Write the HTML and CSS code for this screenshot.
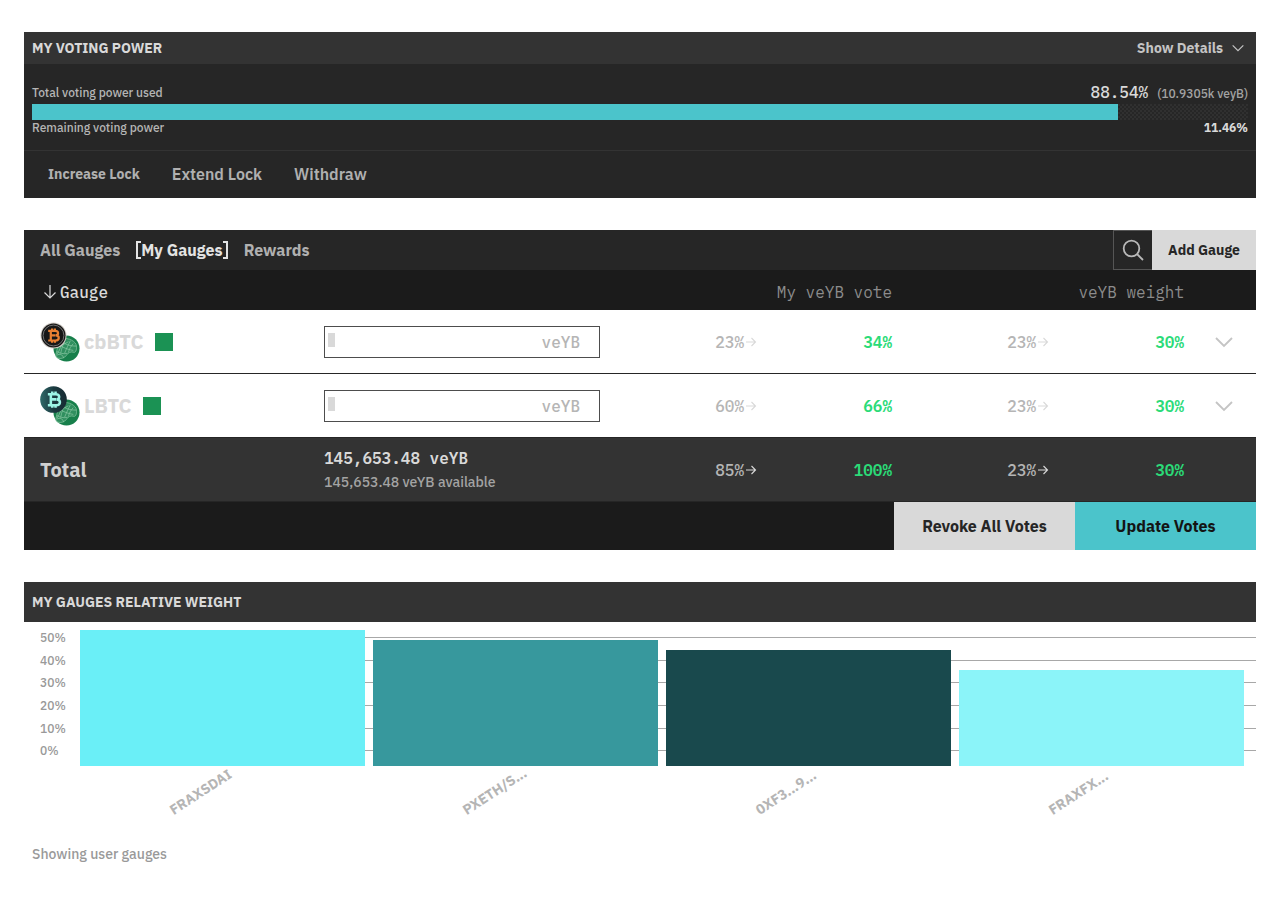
FILE: index.html
```html
<!DOCTYPE html>
<html lang="en">
<head>
  <meta charset="UTF-8">
  <meta name="viewport" content="width=device-width, initial-scale=1.0">
  <title>My Gauges</title>
  <link rel="stylesheet" href="styles.css">
</head>
<body>
  <svg class="defs" aria-hidden="true">
    <defs>
      <symbol id="chevron" viewBox="0 0 20 12">
        <path d="M2 2l8 8 8-8" fill="none" stroke="currentColor" stroke-width="1.8"/>
      </symbol>
      <symbol id="arrow" viewBox="0 0 12 12">
        <path d="M1 6h9.5M6.5 2l4 4-4 4" fill="none" stroke="currentColor" stroke-width="1.1"/>
      </symbol>
      <symbol id="bitcoin" viewBox="0 0 14 16">
        <path d="M1 3.2h7.2c4 0 3.8 4.4.9 4.7 4 .4 3.8 5.3-.6 5.3H1M3.7 3.2v10M3.7 7.9h5M5 .8v2.4M8 .8v2.4M5 13.2v2.2M8 13.2v2.2" fill="none" stroke="currentColor" stroke-width="2.3"/>
      </symbol>
      <symbol id="chain" viewBox="0 0 28 28">
        <circle cx="14" cy="14" r="13.5" fill="#177f4b"/>
        <g fill="none" stroke="#8cc9a6" stroke-width=".7">
          <path d="M9 4.500C13 2 22 5 24 10c1 4 0 8-2 8-4-1-6 0-8 3-2 3-6 4-9 3-3-1-2-4-1-8 1-5 2-9 5-11.500z" fill="#4aa073" fill-opacity=".5"/>
          <path d="M9 4.500c1 5 8 7 15 7M6 10c4 3 9 5 15 6M4 17c3 2 7 3 11 2M4 21c3-2 6-1 7 3M13 4c-2 5-4 9-5 15M18 6c-2 4-4 8-6 13M21 9c-2 2-4 5-5 9M9 5c0 6-2 11-5 15M5 13l11-6"/>
        </g>
      </symbol>
    </defs>
  </svg>

  <main class="page">
    <section class="panel">
      <header class="panel-header">
        <h2>My Voting Power</h2>
        <button class="details-button" type="button">Show Details
          <svg class="chevron-small"><use href="#chevron"/></svg>
        </button>
      </header>
      <div class="power">
        <div class="power-row power-used">
          <span>Total voting power used</span>
          <span><strong class="power-value">88.54%</strong><span class="power-amount">(10.9305k veyB)</span></span>
        </div>
        <div class="bar"><div class="bar-fill" style="width: 89.3%"></div></div>
        <div class="power-row">
          <span>Remaining voting power</span>
          <strong class="power-left">11.46%</strong>
        </div>
      </div>
      <div class="actions">
        <button class="action action-small" type="button">Increase Lock</button>
        <button class="action" type="button">Extend Lock</button>
        <button class="action" type="button">Withdraw</button>
      </div>
    </section>

    <section class="gauges">
      <div class="toolbar">
        <nav class="tabs">
          <a href="#all">All Gauges</a>
          <a href="#my" class="active">My Gauges</a>
          <a href="#rewards">Rewards</a>
        </nav>
        <button class="search-button" type="button" aria-label="Search">
          <svg viewBox="0 0 24 24"><circle cx="10.500" cy="10.500" r="7.800"/><path d="M16 16l6 6"/></svg>
        </button>
        <button class="add-button" type="button">Add Gauge</button>
      </div>

      <table class="gauge-table">
        <colgroup>
          <col><col><col><col><col class="col-toggle">
        </colgroup>
        <thead>
          <tr>
            <th class="col-name sorted"><svg viewBox="0 0 14 16"><path d="M7 1v13M1.500 8.500L7 14l5.500-5.500"/></svg>Gauge</th>
            <th></th>
            <th>My veYB vote</th>
            <th>veYB weight</th>
            <th></th>
          </tr>
        </thead>
        <tbody>
          <tr>
            <td class="col-name">
              <div class="gauge">
                <span class="coins">
                  <svg class="coin-back"><use href="#chain"/></svg>
                  <svg class="coin-front coin-cb" viewBox="0 0 28 28">
                    <circle cx="14" cy="14" r="13.500" fill="#d5d0ca"/>
                    <circle cx="14" cy="14" r="12.500" fill="#171717"/>
                    <circle cx="14" cy="14" r="10.800" fill="none" stroke="#8b8b8b" stroke-width=".8"/>
                    <use href="#bitcoin" x="7" y="6" width="15" height="16"/>
                  </svg>
                </span>
                <span class="gauge-name">cbBTC</span>
                <span class="marker"></span>
              </div>
            </td>
            <td>
              <div class="amount">
                <input type="text" id="vote-cbbtc" aria-label="cbBTC vote amount">
                <span class="caret"></span>
                <label for="vote-cbbtc">veYB</label>
              </div>
            </td>
            <td><div class="change"><span>23%<svg><use href="#arrow"/></svg></span><strong>34%</strong></div></td>
            <td><div class="change"><span>23%<svg><use href="#arrow"/></svg></span><strong>30%</strong></div></td>
            <td class="toggle-cell"><button class="toggle" type="button" aria-label="Expand cbBTC"><svg><use href="#chevron"/></svg></button></td>
          </tr>
          <tr>
            <td class="col-name">
              <div class="gauge">
                <span class="coins">
                  <svg class="coin-back"><use href="#chain"/></svg>
                  <svg class="coin-front coin-l" viewBox="0 0 28 28">
                    <defs>
                      <linearGradient id="lbtc"><stop offset="0" stop-color="#2f6a69"/><stop offset=".5" stop-color="#1b3a40"/><stop offset="1" stop-color="#172c33"/></linearGradient>
                    </defs>
                    <circle cx="14" cy="14" r="13.800" fill="url(#lbtc)"/>
                    <use href="#bitcoin" x="7" y="4" width="16" height="20"/>
                  </svg>
                </span>
                <span class="gauge-name">LBTC</span>
                <span class="marker"></span>
              </div>
            </td>
            <td>
              <div class="amount">
                <input type="text" id="vote-lbtc" aria-label="LBTC vote amount">
                <span class="caret"></span>
                <label for="vote-lbtc">veYB</label>
              </div>
            </td>
            <td><div class="change"><span>60%<svg><use href="#arrow"/></svg></span><strong>66%</strong></div></td>
            <td><div class="change"><span>23%<svg><use href="#arrow"/></svg></span><strong>30%</strong></div></td>
            <td class="toggle-cell"><button class="toggle" type="button" aria-label="Expand LBTC"><svg><use href="#chevron"/></svg></button></td>
          </tr>
        </tbody>
        <tfoot>
          <tr>
            <td class="col-name total-name">Total</td>
            <td>
              <div class="total-amount">145,653.48 veYB</div>
              <div class="total-available">145,653.48 veYB available</div>
            </td>
            <td><div class="change"><span>85%<svg><use href="#arrow"/></svg></span><strong>100%</strong></div></td>
            <td><div class="change"><span>23%<svg><use href="#arrow"/></svg></span><strong>30%</strong></div></td>
            <td></td>
          </tr>
        </tfoot>
      </table>

      <div class="vote-buttons">
        <button class="revoke" type="button">Revoke All Votes</button>
        <button class="update" type="button">Update Votes</button>
      </div>
    </section>

    <section class="weights">
      <header class="panel-header weights-header">
        <h2>My Gauges Relative Weight</h2>
      </header>
      <div class="chart">
        <ul class="scale">
          <li><span>50%</span></li>
          <li><span>40%</span></li>
          <li><span>30%</span></li>
          <li><span>20%</span></li>
          <li><span>10%</span></li>
          <li><span>0%</span></li>
        </ul>
        <div class="columns">
          <div class="column" style="height: 136px; background-color: #6aeff7"></div>
          <div class="column" style="height: 126px; background-color: #37989d"></div>
          <div class="column" style="height: 116px; background-color: #19494d"></div>
          <div class="column" style="height: 96px; background-color: #8bf4f9"></div>
        </div>
      </div>
      <div class="names">
        <div><span>FRAXSDAI</span></div>
        <div><span>PXETH/S...</span></div>
        <div><span>0XF3...9...</span></div>
        <div><span>FRAXFX...</span></div>
      </div>
      <p class="note">Showing user gauges</p>
    </section>
  </main>
</body>
</html>
```
FILE: styles.css
```css
* {
  box-sizing: border-box;
}
body {
  margin: 0;
  background-color: #ffffff;
  font-family: "IBM Plex Sans", Roboto, "Liberation Sans", sans-serif;
  font-size: 16px;
  font-weight: 500;
  color: #d9d9d9;
}
button {
  border: none;
  padding: 0;
  background: none;
  color: inherit;
  font-family: inherit;
  font-size: 16px;
  font-weight: 700;
  cursor: pointer;
}
.defs {
  position: absolute;
  width: 0;
  height: 0;
}
.page {
  display: flex;
  flex-direction: column;
  gap: 32px;
  padding: 32px 24px;
}

/* voting power */
.panel {
  background-color: #262626;
}
.panel-header {
  display: flex;
  justify-content: space-between;
  align-items: center;
  height: 32px;
  padding: 0 8px;
  background-color: #333333;
}
.panel-header h2 {
  margin: 0;
  font-size: 14px;
  font-weight: 700;
  text-transform: uppercase;
}
.details-button {
  display: flex;
  align-items: center;
  gap: 8px;
  padding-right: 3px;
  font-size: 14px;
  color: #c4c4c4;
}
.chevron-small {
  width: 14px;
  height: 8px;
}
.power {
  padding: 16px 8px;
}
.power-row {
  display: flex;
  justify-content: space-between;
  align-items: center;
  height: 14px;
  font-size: 12px;
  color: #b5b5b5;
}
.power-used {
  height: 24px;
}
.power-value {
  margin-right: 9px;
  font-family: "IBM Plex Mono", "Liberation Mono", monospace;
  font-size: 16px;
  font-weight: 500;
  color: #d9d9d9;
}
.power-amount {
  color: #a3a3a3;
}
.power-left {
  color: #d9d9d9;
}
.bar {
  height: 16px;
  background: conic-gradient(#303030 25%, #262626 0 50%, #303030 0 75%, #262626 0) 0 0 / 4px 4px;
}
.bar-fill {
  height: 100%;
  background-color: #4bc4cb;
}
.actions {
  display: flex;
  gap: 32px;
  height: 48px;
  padding: 0 24px 1px;
  border-top: 1px solid #333333;
}
.action {
  color: #b0b0b0;
  font-weight: 600;
}
.action-small {
  font-size: 14px;
  font-weight: 700;
}

/* gauge list */
.toolbar {
  display: flex;
  height: 40px;
  background-color: #262626;
}
.tabs {
  display: flex;
  flex: 1;
  align-items: center;
  gap: 16px;
  padding: 0 16px;
}
.tabs a {
  color: #b0b0b0;
  font-weight: 700;
  text-decoration: none;
}
.tabs .active {
  display: flex;
  align-items: center;
  color: #e3e3e3;
}
.active::before,
.active::after {
  content: "";
  box-sizing: border-box;
  width: 5px;
  height: 18px;
  border: 2px solid #e3e3e3;
}
.active::before {
  border-right: none;
}
.active::after {
  border-left: none;
}
.search-button {
  width: 39px;
  border: 1px solid #555555;
  border-right: none;
}
.search-button svg {
  display: block;
  width: 24px;
  height: 24px;
  margin: auto;
  fill: none;
  stroke: #b8b8b8;
  stroke-width: 1.8;
}
.add-button {
  width: 104px;
  background-color: #d9d9d9;
  color: #262626;
  font-size: 14px;
}
.gauge-table {
  width: 100%;
  table-layout: fixed;
  border-spacing: 0;
  font-family: "IBM Plex Mono", "Liberation Mono", monospace;
}
.col-toggle {
  width: 64px;
}
.gauge-table th,
.gauge-table td {
  padding: 0 8px;
}
.gauge-table .col-name {
  padding-left: 16px;
  text-align: left;
}
.gauge-table th {
  height: 40px;
  padding-top: 4px;
  background-color: #1b1b1b;
  color: #8c8c8c;
  font-weight: 400;
  text-align: right;
}
.gauge-table .sorted {
  color: #d9d9d9;
  font-weight: 500;
}
.sorted svg {
  width: 14px;
  height: 16px;
  margin: 0 3px;
  vertical-align: -2px;
  fill: none;
  stroke: currentColor;
  stroke-width: 1.2;
}
.gauge-table tr {
  height: 64px;
}
.gauge-table thead tr {
  height: 40px;
}
.gauge-table td {
  border-bottom: 1px solid #262626;
}
.gauge {
  display: flex;
  align-items: center;
}
.coins {
  position: relative;
  width: 40px;
  height: 40px;
  margin-right: 4px;
}
.coins svg {
  position: absolute;
  width: 27px;
  height: 27px;
}
.coin-back {
  right: 0;
  bottom: 0;
}
.coin-front {
  left: 0;
  top: 0;
}
.coin-cb {
  color: #e98032;
}
.coin-l {
  color: #9df5e6;
}
.gauge-name {
  font-family: "IBM Plex Sans", Roboto, "Liberation Sans", sans-serif;
  font-size: 20px;
  font-weight: 700;
}
.marker {
  width: 18px;
  height: 18px;
  margin-left: 11px;
  background-color: #1b9254;
}
.amount {
  position: relative;
  display: flex;
  align-items: center;
  height: 32px;
  padding-right: 19px;
  border: 1px solid #4d4d4d;
  color: #b5b5b5;
}
.amount input {
  flex: 1;
  min-width: 0;
  height: 100%;
  padding: 0 3px;
  border: none;
  outline: none;
  background: none;
  font: inherit;
}
.caret {
  position: absolute;
  left: 3px;
  top: 6px;
  width: 7px;
  height: 14px;
  background-color: #d9d9d9;
}
.change {
  display: flex;
  justify-content: flex-end;
  align-items: center;
  color: #b5b5b5;
}
.change span {
  display: flex;
  align-items: center;
}
.change svg {
  width: 12px;
  height: 12px;
  margin-left: 1px;
  color: #d9d9d9;
}
.change strong {
  width: 135px;
  color: #2bdb78;
  font-weight: 600;
  text-align: right;
}
.toggle-cell {
  text-align: center;
}
.toggle {
  color: #c4c4c4;
}
.toggle svg {
  display: block;
  width: 20px;
  height: 12px;
}
tfoot {
  background-color: #333333;
}
.total-name {
  font-family: "IBM Plex Sans", Roboto, "Liberation Sans", sans-serif;
  font-size: 20px;
  font-weight: 700;
  color: #d0d0d0;
}
.total-amount {
  line-height: 24px;
  font-weight: 600;
}
.total-available {
  font-family: "IBM Plex Sans", Roboto, "Liberation Sans", sans-serif;
  font-size: 14px;
  line-height: 24px;
  color: #a3a3a3;
}
.vote-buttons {
  display: flex;
  justify-content: flex-end;
  height: 48px;
  background-color: #1b1b1b;
}
.vote-buttons button {
  width: 181px;
}
.revoke {
  background-color: #d9d9d9;
  color: #262626;
}
.update {
  background-color: #4bc4cb;
  color: #141414;
}

/* relative weight chart */
.weights-header {
  height: 40px;
}
.chart {
  display: grid;
  height: 144px;
  padding-top: 8px;
}
.scale,
.columns {
  grid-area: 1 / 1;
}
.scale {
  display: flex;
  flex-direction: column;
  margin: 0;
  padding: 0 0 0 16px;
  list-style: none;
  font-size: 12px;
  font-weight: 500;
  line-height: 16px;
  color: #999999;
}
.scale li {
  display: flex;
  flex: 1;
}
.scale span {
  width: 48px;
}
.scale li::after {
  content: "";
  flex: 1;
  height: 1px;
  margin-top: 7px;
  background-color: #a8a8a8;
}
.columns,
.names {
  display: flex;
  gap: 8px;
  padding: 0 12px 0 56px;
}
.columns {
  align-items: flex-end;
}
.column {
  flex: 1;
}
.names {
  height: 72px;
}
.names div {
  display: flex;
  flex: 1;
  justify-content: center;
  padding: 37px 32px 0 0;
}
.names span {
  width: 72px;
  height: 16px;
  font-size: 14px;
  font-weight: 700;
  line-height: 16px;
  color: #b5b5b5;
  white-space: nowrap;
  transform: rotate(-33deg);
  transform-origin: 0 50%;
}
.note {
  margin: 0;
  padding: 8px;
  font-size: 14px;
  line-height: 16px;
  color: #999999;
}
```
